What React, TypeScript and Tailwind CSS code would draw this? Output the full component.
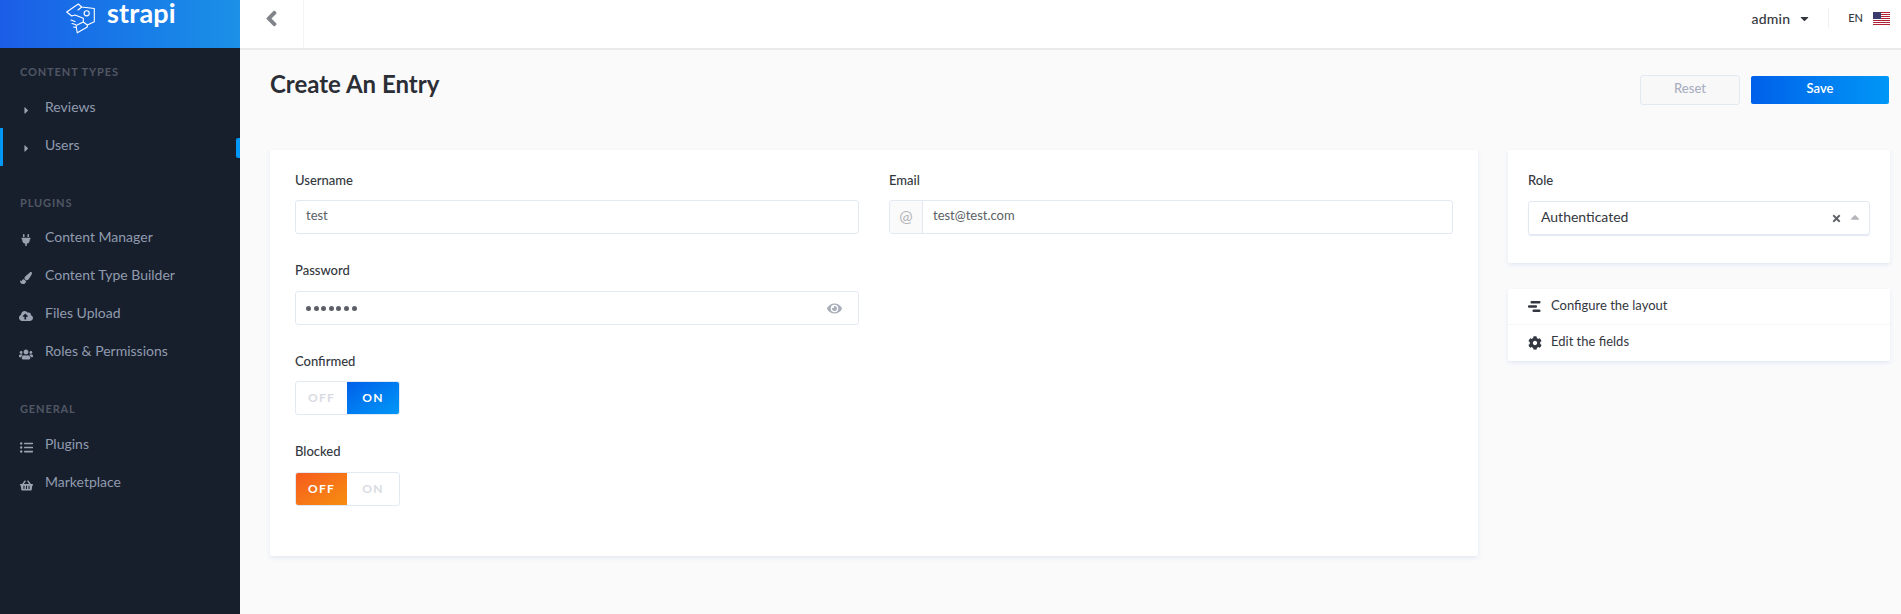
import { FaAngleLeft, FaCaretDown, FaCaretRight, FaCaretUp, FaCloudUploadAlt, FaCog, FaEye, FaListUl, FaPaintBrush, FaPlug, FaShoppingBasket, FaTimes, FaUsers } from "react-icons/fa";
import type { ReactNode } from "react";

function NavItem({ icon, label, active }: { icon: ReactNode; label: string; active?: boolean }) {
  return (
    <div className={`relative flex h-[38px] items-center text-[14px] ${active ? "border-l-[3px] border-[#0097f7] pl-[16px]" : "pl-[19px]"}`}>
      <span className="flex w-[14px] translate-y-[1px] justify-center text-[#9ba3b2]">{icon}</span>
      <span className="ml-[12px] -translate-y-[3px] text-[#919bae]">{label}</span>
      {active && <span className="absolute right-0 top-[10px] h-[20px] w-[4px] rounded-l-[2px] bg-[#0097f7]" />}
    </div>
  );
}

function Section({ title, className, rowsClass, children }: { title: string; className?: string; rowsClass: string; children: ReactNode }) {
  return (
    <div className={className}>
      <div className="pl-[20px] text-[11px] font-bold uppercase leading-[14px] tracking-[0.08em] text-[#515764]">{title}</div>
      <div className={rowsClass}>{children}</div>
    </div>
  );
}

function Logo() {
  return (
    <svg width="30" height="31" viewBox="0 0 30 31" fill="none" stroke="white" strokeWidth="1.1" strokeLinejoin="round" strokeLinecap="round">
      <path d="M0.7 9 L12.3 1 L15.7 4 L28.3 5.5 L28.3 18.7 L21.3 22 L21.3 24 L11.3 29.8 L10 22.5 L17.3 19 L17.3 15.3 L9 12 L5.7 13 Z" />
      <path d="M15.7 4 L12 7 M21.3 22 L17.3 19" />
      <circle cx="20.7" cy="10.3" r="2.6" />
      <path d="M5 17 L9 18.5 M6 20.5 L9.5 21.5 M7.5 24 L10 24.5" />
    </svg>
  );
}

function LayoutIcon() {
  return (
    <svg width="13" height="11" viewBox="0 0 13 11" fill="currentColor">
      <rect x="2.5" y="0" width="10" height="2.6" rx="1" />
      <rect x="0" y="4.2" width="9" height="2.6" rx="1" />
      <rect x="4.5" y="8.4" width="8" height="2.6" rx="1" />
    </svg>
  );
}

function Flag() {
  const stripes = [0, 2, 4, 6, 8, 10, 12];
  return (
    <svg width="17" height="13" viewBox="0 0 17 13">
      <rect width="17" height="13" fill="#fff" />
      {stripes.map((y) => (
        <rect key={y} y={y} width="17" height="1" fill="#b22234" />
      ))}
      <rect width="8" height="7" fill="#3c3b6e" />
    </svg>
  );
}

function Label({ children }: { children: ReactNode }) {
  return <div className="text-[13px] font-medium leading-[16px] text-[#333740]">{children}</div>;
}

function Toggle({ on, className }: { on: boolean; className: string }) {
  return (
    <div className={`flex h-[34px] w-[105px] overflow-hidden rounded-[3px] border border-[#e3e9f3] text-[12px] font-bold tracking-[0.1em] ${className}`}>
      <div className={`flex w-[51px] items-center justify-center ${on ? "text-[#d8dbe2]" : "bg-gradient-to-br from-[#f65a1d] to-[#f68e0e] text-white"}`}>OFF</div>
      <div className={`flex flex-1 items-center justify-center ${on ? "bg-gradient-to-br from-[#005fea] to-[#0097f6] text-white" : "text-[#d8dbe2]"}`}>ON</div>
    </div>
  );
}

export default function App() {
  return (
    <div className="flex h-[614px] w-[1901px] overflow-hidden bg-[#fafafb] font-['Lato','Noto_Sans',sans-serif]">
      <aside className="h-full w-[240px] shrink-0 bg-[#171f2d]">
        <div className="flex h-[48px] items-center gap-[11px] bg-gradient-to-r from-[#1c5de7] to-[#1c91e7] pb-[12px] pl-[66px]">
          <Logo />
          <span className="-translate-y-[5px] text-[27px] font-bold leading-[24px] tracking-[0.2px] text-white">strapi</span>
        </div>
        <Section title="Content Types" className="pt-[17px]" rowsClass="mt-[11px]">
          <NavItem icon={<FaCaretRight size={11} />} label="Reviews" />
          <NavItem icon={<FaCaretRight size={11} />} label="Users" active />
        </Section>
        <Section title="Plugins" className="mt-[30px]" rowsClass="mt-[10px]">
          <NavItem icon={<FaPlug size={12} />} label="Content Manager" />
          <NavItem icon={<FaPaintBrush size={12} />} label="Content Type Builder" />
          <NavItem icon={<FaCloudUploadAlt size={14} />} label="Files Upload" />
          <NavItem icon={<FaUsers size={15} />} label="Roles &amp; Permissions" />
        </Section>
        <Section title="General" className="mt-[30px]" rowsClass="mt-[11px]">
          <NavItem icon={<FaListUl size={13} />} label="Plugins" />
          <NavItem icon={<FaShoppingBasket size={13} />} label="Marketplace" />
        </Section>
      </aside>

      <main className="min-w-0 flex-1">
        <header className="flex h-[50px] items-stretch border-b-2 border-[#e9eaeb] bg-white">
          <div className="flex w-[64px] items-center justify-center border-r border-[#f3f4f4] pb-[11px] text-[#81848a]">
            <FaAngleLeft size={25} />
          </div>
          <div className="flex-1" />
          <div className="flex items-center pb-[12px]">
            <div className="flex items-center text-[14px] tracking-[0.2px] text-[#333740]">
              <span className="font-medium">admin</span>
              <FaCaretDown size={13} className="ml-[8px]" />
            </div>
            <div className="ml-[17px] h-[20px] w-px bg-[#f0f0f0]" />
            <div className="ml-[19px] mr-[11px] flex items-center gap-[10px]">
              <span className="text-[11px] font-medium text-[#333740]">EN</span>
              <Flag />
            </div>
          </div>
        </header>

        <div className="pl-[30px] pr-[11px] pt-[19px]">
          <div className="flex items-start justify-between">
            <h1 className="text-[24px] font-bold leading-[30px] text-[#2b2e35]">Create An Entry</h1>
            <div className="mr-[1px] mt-[6px] flex items-center gap-[11px]">
              <button className="h-[30px] w-[100px] rounded-[3px] border border-[#e3e9f3] bg-[#f8f8f9] pb-[2px] text-[13px] font-medium text-[#a9afbf]">Reset</button>
              <button className="h-[28px] w-[138px] rounded-[2px] bg-gradient-to-r from-[#005fea] to-[#0097f6] pb-[2px] text-[13px] font-semibold text-white">Save</button>
            </div>
          </div>

          <div className="mt-[45px] flex items-start gap-[30px]">
            <section className="h-[406px] w-[1208px] rounded-[2px] bg-white px-[25px] pt-[22px] shadow-[0_2px_4px_#e3e9f3]">
              <div className="grid grid-cols-2 gap-x-[30px]">
                <div>
                  <Label>Username</Label>
                  <div className="mt-[12px] flex h-[34px] items-center rounded-[3px] border border-[#e3e9f3] pb-[2px] pl-[10px] text-[13px] text-[#5b5f65]">test</div>
                </div>
                <div>
                  <Label>Email</Label>
                  <div className="mt-[12px] flex h-[34px] overflow-hidden rounded-[3px] border border-[#e3e9f3] text-[13px] text-[#5b5f65]">
                    <span className="flex w-[33px] items-center justify-center border-r border-[#e3e9f3] bg-[#fafafb] pb-[2px] text-[16px] text-[#b3b5b9]">@</span>
                    <span className="flex items-center pb-[2px] pl-[10px]">test@test.com</span>
                  </div>
                </div>
                <div className="mt-[28px]">
                  <Label>Password</Label>
                  <div className="mt-[13px] flex h-[34px] items-center justify-between rounded-[3px] border border-[#e3e9f3] pl-[10px] pr-[16px] text-[#5b5f65]">
                    <span className="flex gap-[2.6px]">
                      {[0, 1, 2, 3, 4, 5, 6].map((i) => (
                        <span key={i} className="h-[5px] w-[5px] rounded-full bg-[#5b5f65]" />
                      ))}
                    </span>
                    <FaEye size={15} className="text-[#a9aeba]" />
                  </div>
                </div>
              </div>
              <div className="mt-[28px]">
                <Label>Confirmed</Label>
                <Toggle on className="mt-[12px]" />
              </div>
              <div className="mt-[28px]">
                <Label>Blocked</Label>
                <Toggle on={false} className="mt-[13px]" />
              </div>
            </section>

            <div className="w-[382px]">
              <section className="h-[113px] rounded-[2px] bg-white px-[20px] pt-[22px] shadow-[0_2px_4px_#e3e9f3]">
                <Label>Role</Label>
                <div className="mt-[13px] flex h-[34px] items-center justify-between rounded-[3px] border border-[#e3e9f3] pl-[12px] pr-[7px] text-[14px] text-[#333740] shadow-[0_1px_1px_#e3e9f3]">
                  <span className="-translate-y-[2px]">Authenticated</span>
                  <span className="flex items-center gap-[6px]">
                    <FaTimes size={11} className="text-[#5f6268]" />
                    <FaCaretUp size={14} className="-translate-y-[1px] text-[#b3b5b9]" />
                  </span>
                </div>
              </section>
              <section className="mt-[26px] h-[72px] rounded-[2px] bg-white shadow-[0_2px_4px_#e3e9f3]">
                <div className="flex h-[36px] items-center gap-[10px] border-b border-[#f6f6f6] pl-[20px] text-[13px] text-[#333740]">
                  <LayoutIcon />
                  <span className="-translate-y-[1px]">Configure the layout</span>
                </div>
                <div className="flex h-[36px] items-center gap-[9px] pl-[20px] text-[13px] text-[#333740]">
                  <FaCog size={14} />
                  <span className="-translate-y-[1px]">Edit the fields</span>
                </div>
              </section>
            </div>
          </div>
        </div>
      </main>
    </div>
  );
}
